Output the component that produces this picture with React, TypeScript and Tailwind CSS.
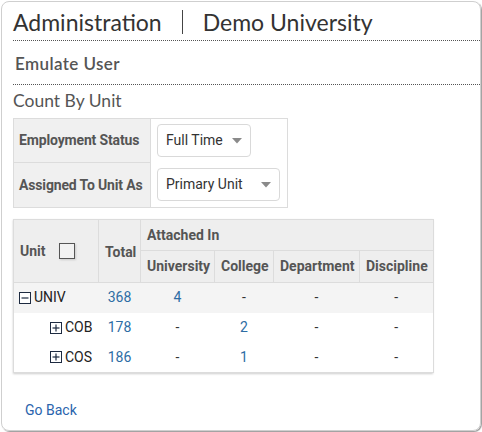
import React from "react";

const Caret = () => (
  <svg width="10" height="6" viewBox="0 0 10 6" className="shrink-0">
    <path d="M0 0 L10 0 L5 5.5 Z" fill="#8a8a8a" />
  </svg>
);

const Select = ({ label, width }: { label: string; width: string }) => (
  <div
    className={`${width} h-[33px] flex items-center justify-between pl-[8px] pr-[8px] border border-[#d9d9d9] rounded-[4px] bg-white text-[14px] text-[#333]`}
  >
    <span>{label}</span>
    <Caret />
  </div>
);

const TreeBox = ({ minus }: { minus?: boolean }) => (
  <svg width="12" height="12" viewBox="0 0 12 12" className="shrink-0">
    <rect x="0.5" y="0.5" width="11" height="11" fill="white" stroke="#1d2a40" />
    <path d="M2.5 6 H9.5" stroke="#1d2a40" strokeWidth="1.2" />
    {!minus && <path d="M6 2.5 V9.5" stroke="#1d2a40" strokeWidth="1.2" />}
  </svg>
);

const th = "border border-[#dcdcdc] bg-[#eeeeee] font-bold text-[#555] text-[14px] text-left px-[6px] whitespace-nowrap";
const td = "border-y-0 px-[6px] text-center text-[14px] h-[30px]";
const label = "bg-[#f0f0f0] border border-[#dcdcdc] px-[5px] font-bold text-[14px] tracking-[-0.15px] text-[#555] whitespace-nowrap";

export default function App() {
  return (
    <div className="w-[482px] h-[432px] bg-white" style={{ fontFamily: "Roboto, 'Liberation Sans', sans-serif" }}>
      <div className="w-[480px] h-[430px] ml-px mt-px border border-[#cfcfcf] rounded-[8px] shadow-[1px_1px_1px_#999] flex flex-col">
        <div className="ml-[11px] h-[39px] border-b border-dotted border-[#555] flex items-center pt-[2px] text-[23px] text-[#333]" style={{ fontFamily: "Lato, 'Open Sans', sans-serif" }}>
          <span>Administration</span>
          <span className="w-px h-[24px] bg-[#444] mx-[20px]" />
          <span>Demo University</span>
        </div>
        <div className="ml-[11px] h-[44px] border-b border-dotted border-[#555] flex items-center pt-[2px] pl-[2px] text-[17px] font-semibold tracking-[0.4px] text-[#555]" style={{ fontFamily: "Lato, 'Open Sans', sans-serif" }}>
          Emulate User
        </div>
        <div className="ml-[11px] h-[31px] flex items-center pt-[1px] text-[17.5px] text-[#555]" style={{ fontFamily: "Lato, 'Open Sans', sans-serif" }}>
          Count By Unit
        </div>
        <div className="ml-[11px] mt-[2px]">
          <table className="border-collapse border border-[#dcdcdc] table-fixed w-[274px]">
            <colgroup>
              <col className="w-[137px]" />
              <col className="w-[137px]" />
            </colgroup>
            <tbody>
              <tr className="h-[44px]">
                <td className={label}>Employment Status</td>
                <td className="px-[6px] align-middle">
                  <Select label="Full Time" width="w-[94px]" />
                </td>
              </tr>
              <tr className="h-[45px]">
                <td className={label}>Assigned To Unit As</td>
                <td className="px-[6px] align-middle">
                  <Select label="Primary Unit" width="w-[123px]" />
                </td>
              </tr>
            </tbody>
          </table>
        </div>
        <div className="ml-[11px] mt-[11px] w-[420px] shadow-[0_1px_2px_rgba(0,0,0,0.2)]">
          <table className="border-collapse w-[420px] table-fixed">
            <colgroup>
              <col className="w-[85px]" />
              <col className="w-[42px]" />
              <col className="w-[74px]" />
              <col className="w-[59px]" />
              <col className="w-[86px]" />
              <col className="w-[74px]" />
            </colgroup>
            <thead>
              <tr className="h-[31px]">
                <th rowSpan={2} className={th}>
                  <div className="flex items-center gap-[13px]">
                    <span>Unit</span>
                    <span className="w-[16px] h-[16px] border border-[#555] bg-[#f2f2f2] shadow-[1px_1px_2px_rgba(0,0,0,0.15)]" />
                  </div>
                </th>
                <th rowSpan={2} className={th + " pt-[3px]"}>Total</th>
                <th colSpan={4} className={th}>Attached In</th>
              </tr>
              <tr className="h-[32px]">
                <th className={th}>University</th>
                <th className={th}>College</th>
                <th className={th}>Department</th>
                <th className={th}>Discipline</th>
              </tr>
            </thead>
            <tbody className="border border-[#dcdcdc]">
              <tr className="bg-[#f4f4f4]">
                <td className="h-[30px] px-[5px] text-[14px] text-[#222]">
                  <div className="flex items-center gap-[3px]">
                    <TreeBox minus />
                    <span>UNIV</span>
                  </div>
                </td>
                <td className={td + " text-[#2e6da4]"}>368</td>
                <td className={td + " text-[#2e6da4]"}>4</td>
                <td className={td + " text-[#333]"}>-</td>
                <td className={td + " text-[#333]"}>-</td>
                <td className={td + " text-[#333]"}>-</td>
              </tr>
              {[
                ["COB", "178", "2"],
                ["COS", "186", "1"],
              ].map(([u, t, c]) => (
                <tr key={u} className="bg-white">
                  <td className="h-[30px] pl-[36px] text-[14px] text-[#222]">
                    <div className="flex items-center gap-[3px]">
                      <TreeBox />
                      <span>{u}</span>
                    </div>
                  </td>
                  <td className={td + " text-[#2e6da4]"}>{t}</td>
                  <td className={td + " text-[#333]"}>-</td>
                  <td className={td + " text-[#2e6da4]"}>{c}</td>
                  <td className={td + " text-[#333]"}>-</td>
                  <td className={td + " text-[#333]"}>-</td>
                </tr>
              ))}
            </tbody>
          </table>
        </div>
        <div className="ml-[23px] mt-[27px] text-[14px] text-[#2a64ad]">Go Back</div>
      </div>
    </div>
  );
}
